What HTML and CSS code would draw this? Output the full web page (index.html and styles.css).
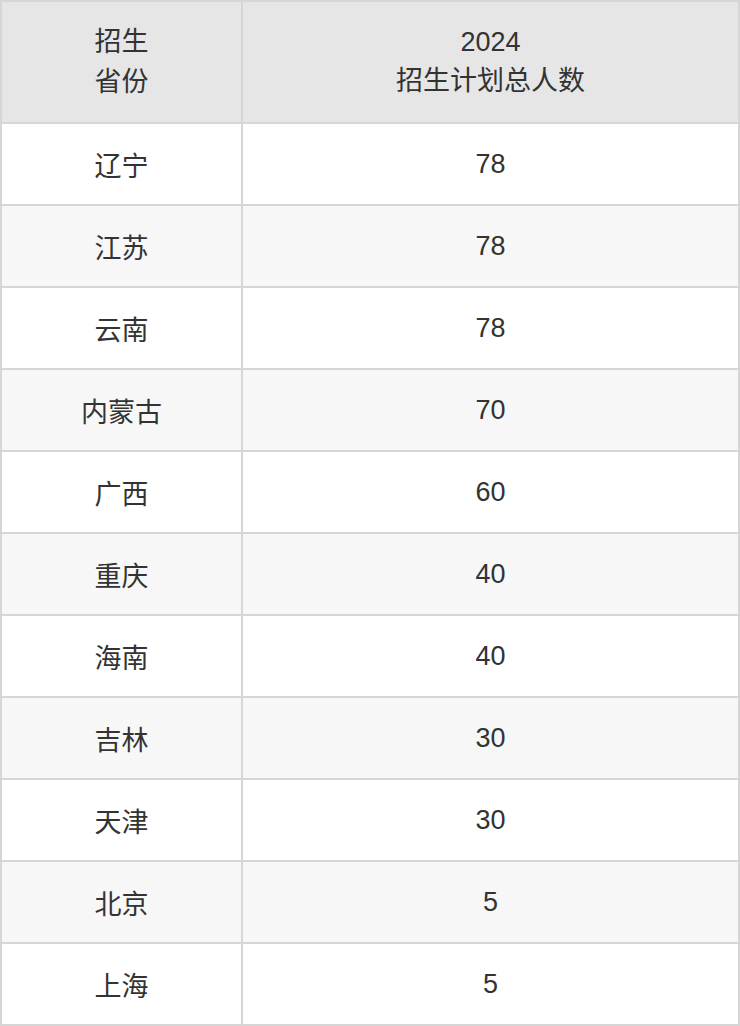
FILE: index.html
```html
<!DOCTYPE html>
<html lang="zh-CN">
<head>
<meta charset="utf-8">
<link rel="stylesheet" href="styles.css">
</head>
<body>
<table class="plan">
  <thead>
    <tr>
      <th class="col-prov"><span class="line line-prov">招生</span><span class="line line-prov">省份</span></th>
      <th class="col-num"><span class="line">2024</span><span class="line">招生计划总人数</span></th>
    </tr>
  </thead>
  <tbody>
    <tr><td>辽宁</td><td>78</td></tr>
    <tr><td>江苏</td><td>78</td></tr>
    <tr><td>云南</td><td>78</td></tr>
    <tr><td>内蒙古</td><td>70</td></tr>
    <tr><td>广西</td><td>60</td></tr>
    <tr><td>重庆</td><td>40</td></tr>
    <tr><td>海南</td><td>40</td></tr>
    <tr><td>吉林</td><td>30</td></tr>
    <tr><td>天津</td><td>30</td></tr>
    <tr><td>北京</td><td>5</td></tr>
    <tr><td>上海</td><td>5</td></tr>
  </tbody>
</table>
</body>
</html>
```

FILE: styles.css
```css
html, body {
  margin: 0;
  padding: 0;
  background: #ffffff;
}

.plan {
  width: 740px;
  border-collapse: collapse;
  table-layout: fixed;
  font-family: "Liberation Sans", "Noto Sans CJK SC", sans-serif;
  font-size: 27px;
  color: #333333;
}

.plan th,
.plan td {
  border: 2px solid #d6d6d6;
  text-align: center;
  vertical-align: middle;
  padding: 0;
  font-weight: normal;
}

.plan th {
  height: 120px;
  background: #e6e6e6;
}

.plan td {
  height: 80px;
}

.col-prov {
  width: 239px;
}

.plan tbody tr:nth-child(even) td {
  background: #f7f7f7;
}

.line {
  display: block;
  line-height: 39px;
}

.line-prov {
  line-height: 40px;
}
```
